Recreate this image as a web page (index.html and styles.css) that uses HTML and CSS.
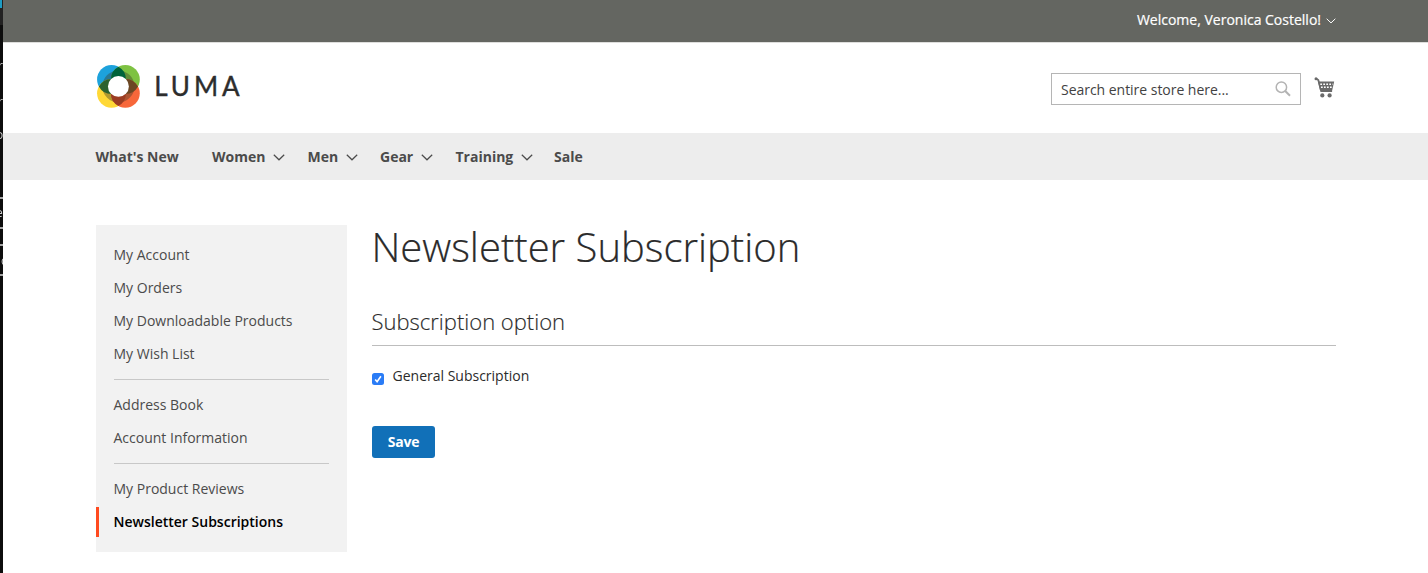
FILE: index.html
```html
<!DOCTYPE html>
<html lang="en">
<head>
<meta charset="utf-8">
<title>Newsletter Subscription</title>
<link rel="stylesheet" href="styles.css">
</head>
<body>
<svg class="defs" width="0" height="0">
  <symbol id="chev" viewBox="0 0 12 7"><path d="M.8.8 6 5.8 11.2.8" fill="none" stroke="currentColor" stroke-width="1.2"/></symbol>
</svg>
<div class="window">
  <div class="edge">
    <i class="edge-tab"></i>
    <span class="edge-char c1">r</span><span class="edge-char c2">r</span><span class="edge-char c3">o</span>
    <i class="edge-line l1"></i><span class="edge-char c4">e</span><i class="edge-line l2"></i>
    <i class="edge-line l3"></i><span class="edge-char c5">c</span><i class="edge-line l4"></i>
  </div>
  <div class="page">
    <div class="panel"><div class="container panel-inner">
      <span>Welcome, Veronica Costello!</span>
      <svg class="panel-chev"><use href="#chev"/></svg>
    </div></div>
    <header class="container header">
      <svg class="logo" viewBox="0 0 148 46" role="img" aria-label="Luma">
        <g transform="scale(.975)">
          <circle cx="15.9" cy="15.9" r="14.8" fill="#1da2dc"/>
          <circle cx="30.1" cy="15.9" r="14.8" fill="#7ec242"/>
          <circle cx="15.9" cy="30.1" r="14.8" fill="#ffd836"/>
          <circle cx="30.1" cy="30.1" r="14.8" fill="#f7673a"/>
          <circle cx="23" cy="23" r="16.4" fill="#3b3a25" opacity=".4"/>
          <path d="M23 2.9a14.8 14.8 0 0 1 0 26 14.8 14.8 0 0 1 0-26Z" fill="#00633a"/>
          <path d="M23 17.1a14.8 14.8 0 0 1 0 26 14.8 14.8 0 0 1 0-26Z" fill="#9b3c22"/>
          <path d="M2.9 23a14.8 14.8 0 0 1 26 0 14.8 14.8 0 0 1-26 0Z" fill="#2b622f"/>
          <path d="M17.1 23a14.8 14.8 0 0 1 26 0 14.8 14.8 0 0 1-26 0Z" fill="#6b4724"/>
          <circle cx="23" cy="23" r="10.7" fill="#fff"/>
        </g>
        <text class="wordmark" x="58.2" y="32.2" textLength="85.5" lengthAdjust="spacing">LUMA</text>
      </svg>
      <div class="tools">
        <div class="search">
          <span>Search entire store here...</span>
          <svg class="glass" viewBox="0 0 16 16"><circle cx="6.4" cy="6.2" r="5.2"/><path d="m10.2 10 4.8 4.8"/></svg>
        </div>
        <svg class="cart" viewBox="0 0 21 22">
          <circle cx="2" cy="1.7" r="1.5"/>
          <path d="M2 1.4 4.3 3 7.2 14h10.9" class="stroke"/>
          <path d="M4 4.6h16.2l-2 8.6H6Z"/>
          <path class="holes" d="M6.3 7.2h12.4M7 10.2h10.9"/>
          <circle cx="8.3" cy="18.4" r="2.1"/><circle cx="15.6" cy="18.4" r="2.1"/>
        </svg>
      </div>
    </header>
    <nav class="nav"><div class="container nav-inner">
      <a class="n-new">What's New</a>
      <a class="n-women">Women<svg><use href="#chev"/></svg></a>
      <a class="n-men">Men<svg><use href="#chev"/></svg></a>
      <a class="n-gear">Gear<svg><use href="#chev"/></svg></a>
      <a class="n-training">Training<svg><use href="#chev"/></svg></a>
      <a>Sale</a>
    </div></nav>
    <div class="container columns">
      <aside class="sidebar">
        <a>My Account</a><a>My Orders</a><a>My Downloadable Products</a><a>My Wish List</a>
        <hr>
        <a>Address Book</a><a>Account Information</a>
        <hr>
        <a>My Product Reviews</a><a class="current">Newsletter Subscriptions</a>
      </aside>
      <main class="main">
        <h1>Newsletter Subscription</h1>
        <h2>Subscription option</h2>
        <label class="choice">
          <svg class="check" viewBox="0 0 12 12"><rect width="12" height="12" rx="2.5" fill="#2a7cf6"/><path d="M3.2 6.4 5.1 8.7 8.9 3.2" fill="none" stroke="#fff" stroke-width="1.6"/></svg>
          <span>General Subscription</span>
        </label>
        <button class="save">Save</button>
      </main>
    </div>
  </div>
</div>
</body>
</html>
```
FILE: styles.css
```css
* { box-sizing: border-box; }
body { margin: 0; background: #fff; color: #2b2b2b; font: 14px/20px "Open Sans", "Noto Sans", sans-serif; }
.defs { position: absolute; }
.window { display: flex; height: 573px; overflow: hidden; }
.edge { position: relative; flex: none; width: 3px; overflow: hidden; background: linear-gradient(#222 0 25px, #0d0d0d 25px); }
.edge-tab { position: absolute; left: -4px; top: -2px; width: 6px; height: 10px; border: 2px solid #1d9cc4; }
.edge-char { position: absolute; right: 0; color: #ccc; font-size: 12px; line-height: 14px; will-change: transform; }
.c1 { top: 59px; } .c2 { top: 95px; } .c3 { top: 128px; } .c4 { top: 206px; } .c5 { top: 254px; right: -4px; }
.edge-line { position: absolute; left: 0; width: 3px; height: 2px; background: #a5a5a5; }
.l1 { top: 197px; } .l2 { top: 227px; } .l3 { top: 244px; } .l4 { top: 274px; }

.page { flex: 1; }
.container { width: 1240px; margin: 0 auto; }
.panel { height: 43px; background: #646661; border-bottom: 1px solid #dededc; color: #fff; }
.panel-inner { display: flex; justify-content: flex-end; padding-top: 10px; }
.panel-inner span { font-weight: 500; -webkit-text-stroke: .2px #fff; }
.panel-chev { width: 10px; height: 6px; margin: 8px 0 0 4.5px; stroke-width: 1.4; }

.header { display: flex; justify-content: space-between; height: 90px; }
.logo { width: 148px; height: 46px; margin-top: 21px; }
.wordmark { font: 400 26px Lato, sans-serif; fill: #2d2d2d; stroke: #2d2d2d; stroke-width: .4px; }
.tools { display: flex; padding: 30px .5px 0 0; }
.search { display: flex; justify-content: space-between; width: 250px; height: 32px; padding: 6px 9.5px 0 9px; border: 1px solid #b5b5b5; color: #424242; letter-spacing: -.03px; }
.glass { width: 16px; height: 16px; margin-top: 1px; fill: none; stroke: #b3b3b3; stroke-width: 1.5; }
.glass path { stroke-width: 2; }
.cart { width: 21px; height: 22px; margin: 4px 0 0 13px; fill: #6a6a6a; }
.cart .stroke { fill: none; stroke: #6a6a6a; stroke-width: 1.8; }
.cart .holes { stroke: #fff; stroke-width: 1.4; stroke-dasharray: 1.7 1.3; }

.nav { height: 47px; background: #ededed; color: #4b4b4b; font-weight: 700; }
.nav-inner { display: flex; padding-top: 14px; }
.nav-inner a { display: flex; }
.nav-inner svg { width: 12px; height: 7px; margin: 7px 0 0 8px; }
.n-new { width: 116.5px; } .n-women { width: 95.5px; } .n-men { width: 72.5px; } .n-gear { width: 75.5px; } .n-training { width: 98.5px; }
.nav-inner .n-men svg, .nav-inner .n-training svg { margin-left: 7.5px; }

.columns { display: flex; gap: 25px; padding-top: 45px; }
.sidebar { width: 251px; height: 327px; padding-top: 15px; background: #f2f2f2; color: #4b4b4b; }
.sidebar a { display: block; height: 30px; margin-bottom: 3px; padding: 5px 18px; }
.sidebar hr { height: 1px; margin: 10px 18px; border: 0; background: #c8c8c8; }
.sidebar .current { padding-left: 15px; border-left: 3px solid #ff4a1f; color: #000; font-weight: 600; }
.main { flex: 1; }
.main h1 { margin: 0; font: 300 40px/44px "Open Sans", sans-serif; -webkit-text-stroke: .2px #2b2b2b; }
.main h2 { height: 41px; margin: 36px 0 20px; border-bottom: 1px solid #bdbdbd; font: 300 22px/32px "Open Sans", sans-serif; -webkit-text-stroke: .15px #2b2b2b; }
.choice { display: flex; height: 20px; }
.check { width: 12px; height: 12px; margin: 7px 9px 0 0; }
.save { display: block; width: 63px; height: 32px; margin-top: 40px; padding: 0 0 0 1px; border: 0; border-radius: 3px; background: #1170b8; color: #fff; font: 700 14px/16px "Open Sans", sans-serif; letter-spacing: -.2px; }
```
